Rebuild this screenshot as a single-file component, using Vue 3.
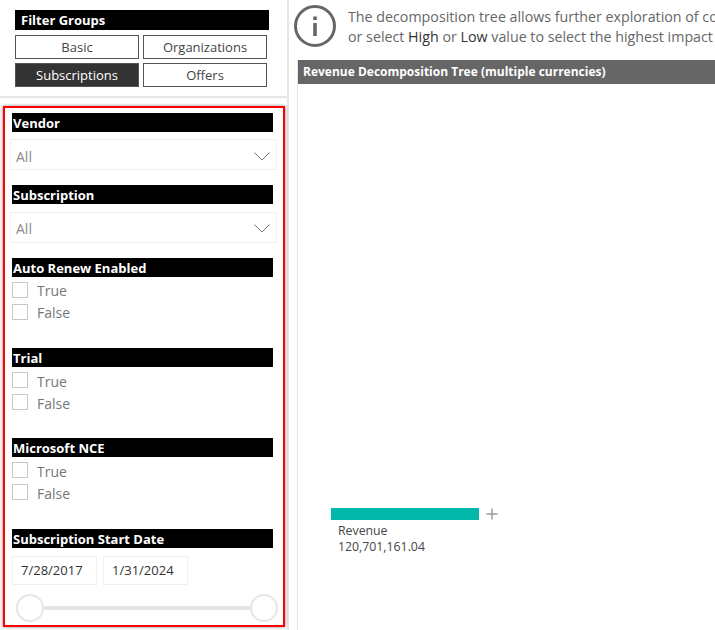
<template>
  <div class="page">
    <aside class="sidebar">
      <section class="groups">
        <h2 class="groups-title">Filter Groups</h2>
        <div class="group-grid">
          <button
            v-for="g in groups"
            :key="g"
            class="group-btn"
            :class="{ active: g === 'Subscriptions' }"
          >
            {{ g }}
          </button>
        </div>
      </section>

      <section class="filters">
        <template v-for="f in filters" :key="f.title">
          <h3 class="filter-title">{{ f.title }}</h3>

          <div v-if="f.kind === 'dropdown'" class="dropdown">
            <span>All</span>
            <svg width="16" height="9" viewBox="0 0 16 9">
              <path d="M0.5 0.5 L8 8 L15.5 0.5" fill="none" stroke="#777" stroke-width="1" />
            </svg>
          </div>

          <div v-else-if="f.kind === 'check'" class="checks">
            <label v-for="o in ['True', 'False']" :key="o" class="check-row">
              <span class="box"></span>{{ o }}
            </label>
          </div>

          <div v-else class="dates">
            <div class="date-row">
              <div class="date">7/28/2017</div>
              <div class="date">1/31/2024</div>
            </div>
            <div class="slider">
              <span class="handle"></span>
              <span class="track"></span>
              <span class="handle"></span>
            </div>
          </div>
        </template>
      </section>
    </aside>

    <main class="content">
      <div class="info">
        <svg class="info-icon" width="42" height="42" viewBox="0 0 42 42">
          <circle cx="21" cy="21" r="19.5" fill="none" stroke="#666" stroke-width="3" />
          <rect x="19.2" y="18" width="3.6" height="13" fill="#666" />
          <rect x="19.2" y="11.5" width="3.6" height="3.5" fill="#666" />
        </svg>
        <p class="info-text">
          <span>The decomposition tree allows further exploration of co</span>
          <span>or select <b>High</b> or <b>Low</b> value to select the highest impact</span>
        </p>
      </div>

      <div class="panel">
        <div class="panel-head">Revenue Decomposition Tree (multiple currencies)</div>
        <div class="tree">
          <div class="node">
            <div class="node-bar">
              <span class="bar"></span>
              <svg width="12" height="12" viewBox="0 0 12 12">
                <path d="M6 0.5 V11.5 M0.5 6 H11.5" stroke="#9a9a9a" stroke-width="1.4" />
              </svg>
            </div>
            <div class="node-label">Revenue</div>
            <div class="node-label">120,701,161.04</div>
          </div>
        </div>
      </div>
    </main>
  </div>
</template>

<script setup>
const groups = ["Basic", "Organizations", "Subscriptions", "Offers"];

const filters = [
  { title: "Vendor", kind: "dropdown" },
  { title: "Subscription", kind: "dropdown" },
  { title: "Auto Renew Enabled", kind: "check" },
  { title: "Trial", kind: "check" },
  { title: "Microsoft NCE", kind: "check" },
  { title: "Subscription Start Date", kind: "date" },
];
</script>

<style>
html, body {
  margin: 0;
  background: #fff;
  overflow: hidden;
}
</style>

<style scoped>
.page {
  display: flex;
  width: 715px;
  height: 630px;
  overflow: hidden;
  background: #fff;
  font-family: "Open Sans", "Noto Sans", sans-serif;
}

/* Left column */
.sidebar {
  flex: none;
  width: 287px;
  height: 630px;
  border-right: 2px solid #e6e6e6;
}

.groups {
  height: 98px;
  box-sizing: border-box;
  padding: 10px 18px 0 15px;
  border-bottom: 2px solid #e6e6e6;
}

.groups-title {
  margin: 0;
  width: 254px;
  height: 20px;
  padding-left: 6px;
  box-sizing: border-box;
  background: #000;
  color: #fff;
  font-size: 13px;
  font-weight: 700;
  line-height: 20px;
}

.group-grid {
  display: grid;
  grid-template-columns: 124px 124px;
  grid-auto-rows: 24px;
  gap: 4px;
  margin-top: 5px;
}

.group-btn {
  padding: 0;
  background: #fff;
  border: 1px solid #555;
  color: #444;
  font-family: inherit;
  font-size: 13px;
}

.group-btn.active {
  background: #333;
  color: #fff;
}

.filters {
  box-sizing: border-box;
  height: 521px;
  margin: 8px 0 0 3px;
  width: 282px;
  padding: 5px 8px 0 7px;
  border: 2px solid #f00;
  box-shadow: -1px 0 3px rgba(0, 0, 0, 0.25), 1px 0 3px rgba(0, 0, 0, 0.25);
}

.filter-title {
  margin: 0;
  height: 19px;
  width: 261px;
  background: #000;
  color: #fff;
  font-size: 13px;
  font-weight: 700;
  line-height: 20px;
  padding-left: 1px;
  box-sizing: border-box;
}

.dropdown {
  display: flex;
  align-items: center;
  justify-content: space-between;
  box-sizing: border-box;
  width: 267px;
  height: 31px;
  margin: 7.4px 0 15px -2px;
  padding: 3px 6px 0 5px;
  border: 1px solid #f0f0f0;
  color: #8a8a8a;
  font-size: 14px;
}

.checks {
  height: 71.33px;
  padding-top: 3px;
  box-sizing: border-box;
}

.check-row {
  display: flex;
  align-items: center;
  height: 22px;
  color: #777;
  font-size: 14px;
}

.box {
  width: 14px;
  height: 14px;
  margin-right: 9px;
  margin-bottom: 2px;
  border: 1px solid #c8c8c8;
}

.date-row {
  display: flex;
  gap: 6px;
  margin-top: 8px;
}

.date {
  box-sizing: border-box;
  width: 85px;
  height: 29px;
  padding-left: 8px;
  border: 1px solid #f0f0f0;
  color: #333;
  font-size: 13px;
  line-height: 27px;
}

.slider {
  display: flex;
  align-items: center;
  width: 262px;
  margin: 9px 0 0 4px;
}

.handle {
  flex: none;
  box-sizing: border-box;
  width: 28px;
  height: 28px;
  background: #fff;
  border: 2px solid #e6e6e6;
  border-radius: 50%;
}

.track {
  flex: 1;
  height: 4px;
  background: #e6e6e6;
}

/* Right column */
.content {
  flex: none;
  width: 426px;
  overflow: hidden;
}

.info {
  display: flex;
  height: 60px;
  padding-left: 5px;
  box-sizing: border-box;
}

.info-icon {
  flex: none;
  margin-top: 5px;
}

.info-text {
  margin: 7px 0 0 12px;
  color: #666;
  font-size: 14.25px;
  line-height: 19.5px;
  white-space: nowrap;
}

.info-text span {
  display: block;
}

.info-text b {
  color: #333;
  font-weight: 400;
}

.panel {
  margin-left: 8px;
  height: 570px;
  border-left: 1px solid #e6e6e6;
}

.panel-head {
  height: 24px;
  padding-left: 5px;
  background: #666;
  color: #fff;
  font-size: 12px;
  font-weight: 700;
  line-height: 24px;
  white-space: nowrap;
}

.tree {
  padding: 424px 0 0 33px;
}

.node-bar {
  display: flex;
  align-items: center;
  gap: 7px;
}

.bar {
  width: 148px;
  height: 12px;
  background: #01b8aa;
}

.node-label {
  margin-left: 7px;
  color: #444;
  font-size: 12.3px;
  line-height: 16px;
}

.node-bar + .node-label {
  margin-top: 3px;
}
</style>
